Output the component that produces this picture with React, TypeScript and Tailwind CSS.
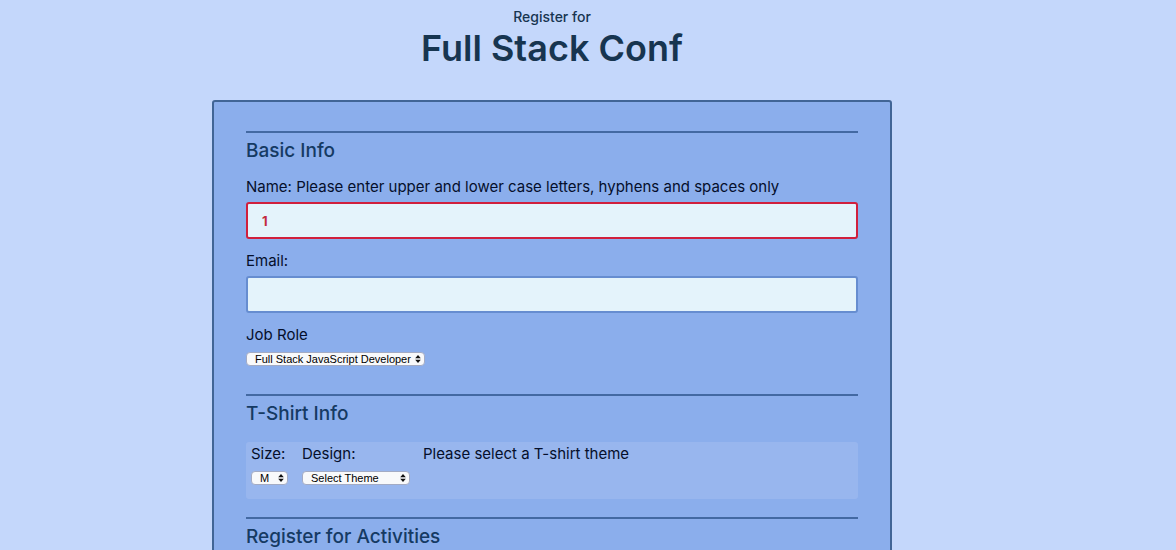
import { useState } from "react";
import type { ReactNode } from "react";

function Picker({ id, options, className }: { id: string; options: string[]; className: string }) {
  const [value, setValue] = useState(options[0]);
  return (
    <div className={`relative h-3.5 ${className}`}>
      <select
        id={id}
        value={value}
        onChange={(e) => setValue(e.target.value)}
        className="block h-3.5 w-full appearance-none rounded-[4px] border border-[#a3abc4] bg-[#f8f9fb] pr-3 pl-2 font-['Liberation_Sans',Arial,sans-serif] text-[11px] leading-3 text-black"
      >
        {options.map((option) => (
          <option key={option}>{option}</option>
        ))}
      </select>
      <svg viewBox="0 0 6 8" className="pointer-events-none absolute top-[3px] right-1 h-2 w-1.5" aria-hidden="true">
        <path d="M0.2 3.3 3 0 5.8 3.3ZM0.2 4.7 3 8 5.8 4.7Z" fill="#111" />
      </svg>
    </div>
  );
}

function Section({ title, children }: { title: string; children?: ReactNode }) {
  return (
    <section className="border-t-2 border-[#4369a2] pt-1.5">
      <h2 className="text-[19px] leading-6 font-medium text-[#153a63]">{title}</h2>
      {children}
    </section>
  );
}

const field =
  "mt-[5px] block h-[37px] w-full rounded-[3px] border-2 bg-[#e4f3fb] px-3.5 text-[13px] leading-5 font-bold outline-none";
const label = "block text-[15px] leading-5 text-[#050f2b]";

export default function App() {
  const [name, setName] = useState("1");
  const [email, setEmail] = useState("");
  return (
    <div className="h-screen overflow-hidden bg-[#c4d7fb] pr-[72px] font-['Inter',sans-serif]">
      <header className="pt-2 text-center text-[#173550]">
        <p className="text-[14px] leading-[18px] font-medium">Register for</p>
        <h1 className="text-[36px] leading-[44px] font-semibold">Full Stack Conf</h1>
      </header>
      <form className="mx-auto mt-[30px] flex max-w-[680px] flex-col gap-7 rounded-[3px] border-2 border-[#416596] bg-[#8baeec] px-8 pt-[29px] pb-8">
        <Section title="Basic Info">
          <div className="mt-3.5 flex flex-col gap-3">
            <div>
              <label htmlFor="name" className={label}>
                Name: Please enter upper and lower case letters, hyphens and spaces only
              </label>
              <input
                id="name"
                type="text"
                value={name}
                onChange={(e) => setName(e.target.value)}
                className={`${field} border-[#d01f3c] text-[#c22a3d]`}
              />
            </div>
            <div>
              <label htmlFor="email" className={label}>
                Email:
              </label>
              <input
                id="email"
                type="email"
                value={email}
                onChange={(e) => setEmail(e.target.value)}
                className={`${field} border-[#668dd0] text-[#153a63]`}
              />
            </div>
            <div>
              <label htmlFor="role" className={`${label} mb-[7px]`}>
                Job Role
              </label>
              <Picker id="role" options={["Full Stack JavaScript Developer", "Front End Developer"]} className="w-[179px]" />
            </div>
          </div>
        </Section>
        <Section title="T-Shirt Info">
          <div className="mt-4 -mb-2.5 flex rounded-[3px] bg-[#98b6ee] px-[5px] pt-0.5 pb-3.5">
            <div className="w-[51px]">
              <label htmlFor="size" className={`${label} mb-[7px]`}>
                Size:
              </label>
              <Picker id="size" options={["M", "S", "L", "XL"]} className="w-[37px]" />
            </div>
            <div className="w-[121px]">
              <label htmlFor="design" className={`${label} mb-[7px]`}>
                Design:
              </label>
              <Picker id="design" options={["Select Theme", "Theme - JS Puns"]} className="w-[108px]" />
            </div>
            <p className={label}>Please select a T-shirt theme</p>
          </div>
        </Section>
        <Section title="Register for Activities" />
      </form>
    </div>
  );
}
